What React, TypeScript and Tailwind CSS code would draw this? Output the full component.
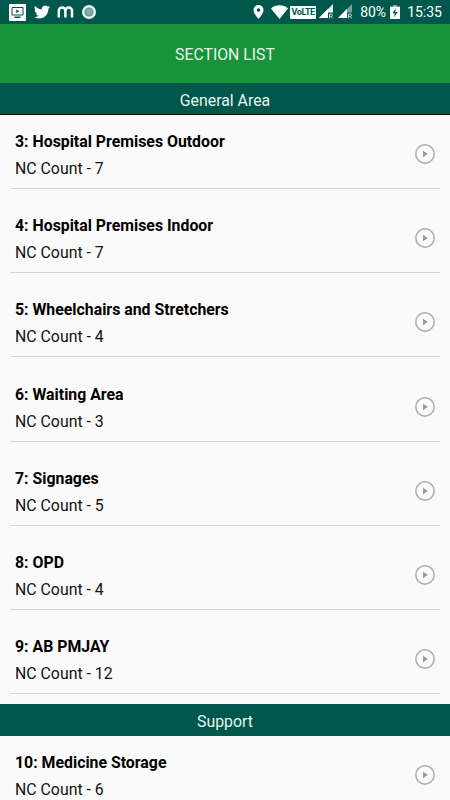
interface Section {
  id: number;
  name: string;
  count: number;
}

interface SectionGroup {
  title: string;
  sections: Section[];
}

const groups: SectionGroup[] = [
  {
    title: "General Area",
    sections: [
      { id: 3, name: "Hospital Premises Outdoor", count: 7 },
      { id: 4, name: "Hospital Premises Indoor", count: 7 },
      { id: 5, name: "Wheelchairs and Stretchers", count: 4 },
      { id: 6, name: "Waiting Area", count: 3 },
      { id: 7, name: "Signages", count: 5 },
      { id: 8, name: "OPD", count: 4 },
      { id: 9, name: "AB PMJAY", count: 12 },
    ],
  },
  {
    title: "Support",
    sections: [{ id: 10, name: "Medicine Storage", count: 6 }],
  },
];

function SignalIcon({ bars }: { bars: "full" | "half" }) {
  return (
    <svg width="16" height="16" viewBox="0 0 16 16">
      <path d="M0 14 14 0v8.500H9V14z" fill={bars === "full" ? "#e6f2f0" : "#6fa39b"} />
      <path d="M0 14 9 5v9z" fill="#fff" />
      <path
        d="M10.500 14.500V10h1.700a1.200 1.200 0 0 1 0 2.400h-1.700m1.700 0 1.500 2.100"
        fill="none"
        stroke="#d5e8e4"
        strokeWidth="0.9"
      />
    </svg>
  );
}

function StatusBar() {
  return (
    <div className="flex h-6 shrink-0 items-center justify-between bg-[#00574b] pr-2 pl-[9px] text-white">
      <div className="flex items-center">
        <svg width="17" height="17" viewBox="0 0 17 17">
          <rect width="17" height="17" rx="0.8" fill="#fff" />
          <path d="M3 3.500h11v7.500H3z" fill="none" stroke="#00574b" strokeWidth="1" />
          <path d="M7.300 5.300v4l3-2zM5.500 12.500h6v1.500h-6z" fill="#00574b" />
        </svg>
        <svg className="ml-2" width="16" height="16" viewBox="0 0 24 24" fill="currentColor">
          <path d="M23.95 4.57a10 10 0 0 1-2.82.77 4.96 4.96 0 0 0 2.16-2.72c-.95.55-2 .95-3.13 1.18a4.92 4.92 0 0 0-8.38 4.48C7.69 8.1 4.07 6.13 1.64 3.16a4.92 4.92 0 0 0 1.52 6.57 4.9 4.9 0 0 1-2.23-.61v.06a4.92 4.92 0 0 0 3.95 4.83 5 5 0 0 1-2.21.08 4.94 4.94 0 0 0 4.6 3.42A9.87 9.87 0 0 1 0 19.54a14 14 0 0 0 7.55 2.21c9.05 0 14-7.5 14-13.98 0-.21 0-.42-.02-.63a9.94 9.94 0 0 0 2.46-2.55z" />
        </svg>
        <svg className="ml-[7px]" width="17" height="14" viewBox="0 0 17 14">
          <path
            d="M1.800 12.500V5.700a3.300 3.300 0 0 1 6.600 0v6.800M8.400 5.700a3.300 3.300 0 0 1 6.600 0v6.800"
            fill="none"
            stroke="#fff"
            strokeWidth="2.500"
          />
        </svg>
        <svg className="ml-2" width="14" height="14" viewBox="0 0 14 14">
          <circle cx="7" cy="7" r="7" fill="#e9f5f3" />
          <circle cx="7" cy="7" r="4.600" fill="#5f9c92" />
          <circle cx="7" cy="7" r="3.200" fill="#87aaa5" />
        </svg>
      </div>

      <div className="flex items-center">
        <svg width="11" height="14" viewBox="0 0 11 14">
          <path
            fillRule="evenodd"
            d="M5.500 0a5 5 0 0 0-5 5c0 3.700 5 9 5 9s5-5.300 5-9a5 5 0 0 0-5-5m0 3.300a1.800 1.800 0 1 1 0 3.600 1.800 1.800 0 0 1 0-3.600"
            fill="#fff"
          />
        </svg>
        <svg className="ml-[7px]" width="17" height="14" viewBox="0 0 17 14">
          <path d="M8.500 14 0 3.400C2.200 1.400 5.200.3 8.500.3s6.300 1.100 8.500 3.100z" fill="#fff" />
        </svg>
        <div className="ml-0.5 flex h-[13px] w-[26px] items-center justify-center rounded-[1px] bg-white font-[Roboto,sans-serif] text-[9px] leading-none font-bold tracking-[-0.4px] text-[#00574b]">
          VoLTE
        </div>
        <div className="ml-[3px] flex gap-[3px]">
          <SignalIcon bars="full" />
          <SignalIcon bars="half" />
        </div>
        <span className="ml-1.5 text-[14px] leading-6">80%</span>
        <svg className="ml-1" width="10" height="14" viewBox="0 0 10 14">
          <path d="M3 0h4v1.600H3z" fill="#8ab5ae" />
          <path d="M0 1.600h10V14H0z" fill="#fff" />
          <path d="M6 3 2.500 8.300h2.200L4 12.300l3.600-5.400H5.300z" fill="#00574b" />
        </svg>
        <span className="ml-[7px] text-[14px] leading-6">15:35</span>
      </div>
    </div>
  );
}

function PlayIcon() {
  return (
    <svg width="20" height="20" viewBox="0 0 20 20">
      <circle cx="10" cy="10" r="9.200" fill="none" stroke="#acacac" strokeWidth="1.500" />
      <path d="M8 6.800v6.400l4.800-3.200z" fill="#999" />
    </svg>
  );
}

function SectionRow({ section }: { section: Section }) {
  return (
    <li className="h-[84.2px] px-2.5">
      <div className="flex h-[74px] items-start justify-between border-b border-[#d6d6d6] px-[5px]">
        <div className="pt-4 text-[15.85px] text-black">
          <div className="leading-[22px] font-bold">
            {section.id}: {section.name}
          </div>
          <div className="mt-[5px] leading-[22px] text-[#111]">NC Count - {section.count}</div>
        </div>
        <div className="pt-[29px]">
          <PlayIcon />
        </div>
      </div>
    </li>
  );
}

export default function App() {
  return (
    <div className="flex h-[800px] w-[450px] flex-col overflow-hidden bg-[#fafafa] font-[Roboto,sans-serif]">
      <StatusBar />
      <header className="flex h-[59px] shrink-0 items-center justify-center bg-[#18933b] pt-0.5 text-[15.8px] text-[#e6f7e9]">
        SECTION LIST
      </header>
      <main>
        {groups.map((group, i) => (
          <section key={group.title}>
            <h2
              className={`flex h-8 items-center justify-center bg-[#00574b] text-[15.85px] text-[#e9f5f3] ${
                i === 0 ? "border-b border-black pt-1" : "pt-[3px]"
              }`}
            >
              {group.title}
            </h2>
            <ul>
              {group.sections.map((section) => (
                <SectionRow key={section.id} section={section} />
              ))}
            </ul>
          </section>
        ))}
      </main>
    </div>
  );
}
